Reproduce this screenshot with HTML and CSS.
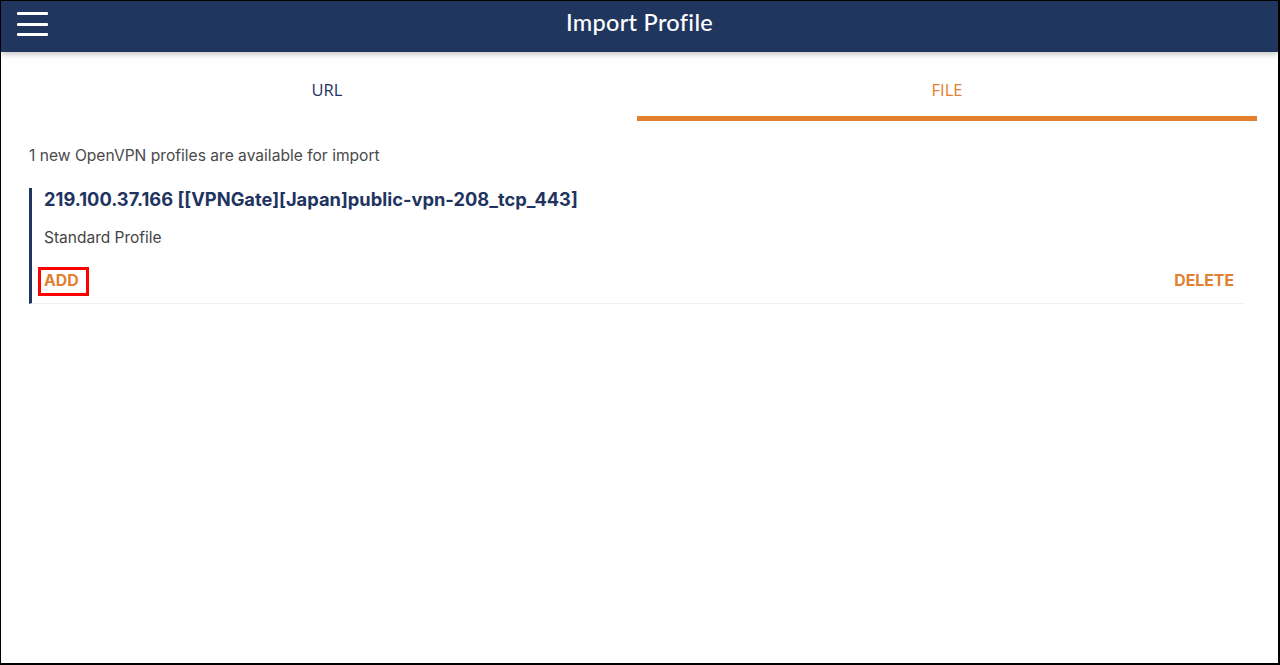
FILE: index.html
```html
<!DOCTYPE html>
<html>
<head>
<meta charset="utf-8">
<link rel="stylesheet" href="styles.css">
</head>
<body>
<div class="frame">
  <header class="topbar">
    <button class="menu" aria-label="menu">
      <span></span><span></span><span></span>
    </button>
    <h1 class="title">Import Profile</h1>
  </header>
  <nav class="tabs">
    <div class="tab">URL</div>
    <div class="tab active">FILE</div>
  </nav>
  <main class="content">
    <p class="notice">1 new OpenVPN profiles are available for import</p>
    <section class="card">
      <h2 class="card-title">219.100.37.166 [[VPNGate][Japan]public-vpn-208_tcp_443]</h2>
      <p class="card-sub">Standard Profile</p>
      <div class="actions">
        <span class="action add">ADD</span>
        <span class="action">DELETE</span>
      </div>
    </section>
  </main>
</div>
</body>
</html>
```
FILE: styles.css
```css
html, body {
  margin: 0;
  padding: 0;
  background: #fff;
}
.frame {
  box-sizing: border-box;
  width: 1280px;
  height: 665px;
  border-top: 1px solid #000;
  border-left: 1px solid #000;
  border-right: 2px solid #000;
  border-bottom: 2px solid #000;
  overflow: hidden;
  font-family: Inter, "Open Sans", sans-serif;
}
.topbar {
  position: relative;
  height: 51px;
  background: #20365f;
  display: flex;
  align-items: center;
  justify-content: center;
  box-shadow: 0 2px 6px rgba(0,0,0,0.25);
}
.menu {
  position: absolute;
  left: 16px;
  top: 11px;
  width: 31px;
  height: 24px;
  padding: 0;
  border: 0;
  background: none;
  display: flex;
  flex-direction: column;
  justify-content: space-between;
}
.menu span {
  display: block;
  height: 3px;
  background: #fff;
  border-radius: 1px;
}
.title {
  margin: 0;
  color: #fff;
  font-family: Lato, "Open Sans", sans-serif;
  font-weight: 500;
  font-size: 23.5px;
  letter-spacing: 0.3px;
  padding-bottom: 10px;
}
.tabs {
  display: flex;
  margin: 0 21px 0 16px;
  height: 69px;
}
.tab {
  flex: 1;
  display: flex;
  align-items: center;
  justify-content: center;
  font-family: "Open Sans", sans-serif;
  font-size: 16.5px;
  color: #1f3460;
  box-sizing: border-box;
  padding-top: 10px;
  border-bottom: 5px solid transparent;
}
.tab.active {
  color: #e2802f;
  border-bottom-color: #e2802f;
}
.content {
  padding: 0 33px 0 28px;
}
.notice {
  margin: 25px 0 0 0;
  font-size: 15.6px;
  line-height: 20px;
  color: #4a4a4a;
}
.card {
  margin-top: 22px;
  border-left: 3px solid #20365f;
  padding-left: 12px;
  padding-top: 0;
  border-bottom: 1px solid #f0f0f0;
}
.card-title {
  margin: 0;
  font-size: 18.3px;
  font-weight: 700;
  line-height: 22px;
  color: #1f3460;
}
.card-sub {
  margin: 18px 0 0 0;
  font-size: 15.5px;
  line-height: 20px;
  color: #444;
}
.actions {
  display: flex;
  justify-content: space-between;
  align-items: flex-start;
  margin-top: 24px;
  padding-right: 11px;
  height: 31px;
}
.action {
  font-size: 15.8px;
  font-weight: 700;
  color: #e2802f;
  line-height: 18px;
  height: 18px;
}
.add {
  outline: 3px solid #f00;
  padding: 2px 7px 3px 3px;
  margin-left: -3px;
  margin-top: -2px;
}
```
